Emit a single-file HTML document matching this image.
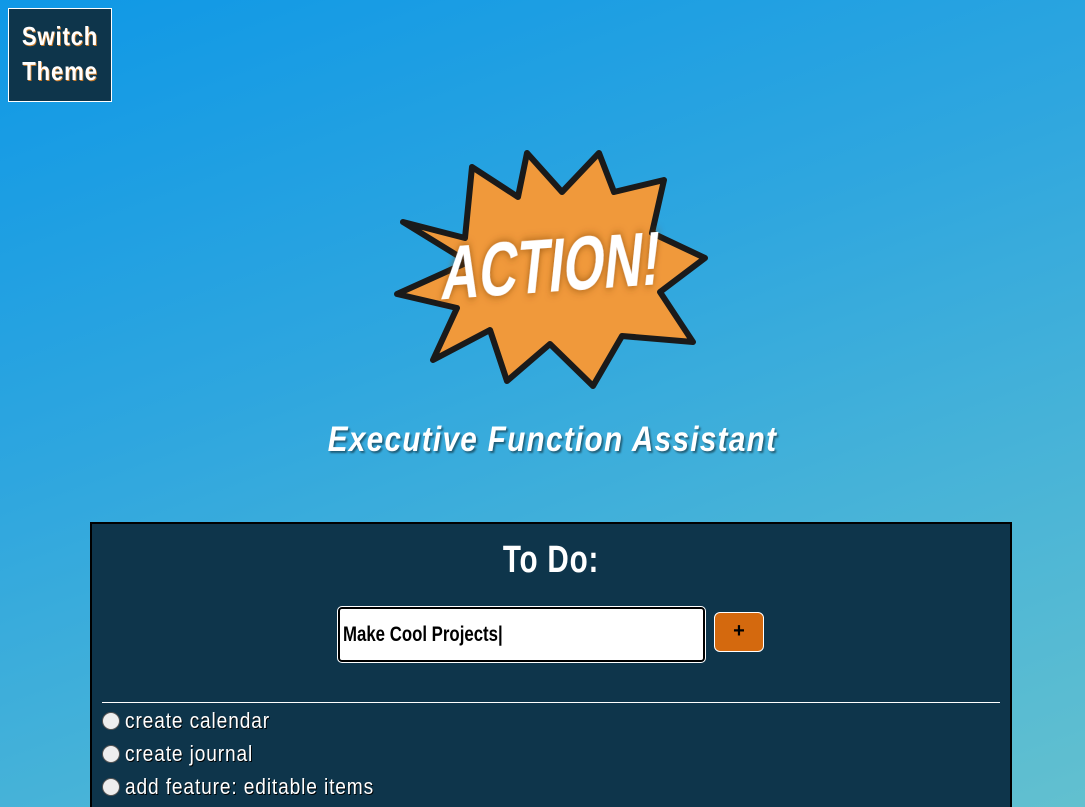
<!DOCTYPE html>
<html><head><meta charset="utf-8"><style>
html,body{margin:0;padding:0;width:1085px;height:807px;overflow:hidden}
body{background:linear-gradient(160deg,#0f98e6 0%,#2ea6df 40%,#4db6d6 75%,#62c0cf 100%);font-family:"Liberation Sans",sans-serif;position:relative}
#sw{position:absolute;left:8px;top:8px;width:104px;height:94px;background:#0e354b;border:1px solid #fff;box-sizing:border-box}
#sw div{position:absolute;left:0;width:100%;text-align:center;color:#fff;font-weight:bold;font-size:26px;letter-spacing:1px;text-shadow:1px 1px 0 #c77a2a;transform:scaleX(.85)}
#title{position:absolute;left:0;width:1105px;top:420px;text-align:center;color:#fff;font-weight:bold;font-style:italic;font-size:35px;letter-spacing:1.5px;text-shadow:2px 2px 2px rgba(0,0,0,.45);transform:scaleX(.85)}
#panel{position:absolute;left:90px;top:522px;width:922px;height:300px;background:#0e354b;border:2px solid #000;box-sizing:border-box}
#todo{position:absolute;left:0;width:100%;top:15px;text-align:center;color:#fff;font-weight:bold;font-size:38px;letter-spacing:1px;transform:scaleX(.78)}
#inp{position:absolute;left:246px;top:83px;width:367px;height:55px;background:#fff;border:2px solid #000;outline:1px solid #fff;border-radius:4px;box-sizing:border-box;font-weight:bold;font-size:21px;line-height:51px;padding-left:3px;color:#000}
#inp span{display:inline-block;transform:scaleX(.8);transform-origin:left}
#btn{position:absolute;left:622px;top:88px;width:50px;height:40px;background:#d4690e;border:1px solid #fff;border-radius:6px;box-sizing:border-box;text-align:center;font-weight:bold;font-size:20px;line-height:37px;color:#000}
#hr{position:absolute;left:10px;top:178px;width:898px;height:1px;background:#fff}
.it{position:absolute;left:10px;color:#fff;font-size:22px;letter-spacing:1px;text-shadow:1px 1px 0 #000;white-space:nowrap}
.it i{display:inline-block;width:18px;height:18px;border-radius:50%;background:#eee;border:1px solid #555;box-sizing:border-box;vertical-align:-2px;margin-right:5px}
.it span{display:inline-block;transform:scaleX(.87);transform-origin:left}
</style></head><body>
<div id="sw"><div style="top:12px">Switch</div><div style="top:47px">Theme</div></div>
<svg width="1085" height="420" style="position:absolute;left:0;top:0">
<defs><filter id="sh"><feDropShadow dx="0" dy="0" stdDeviation="5" flood-color="#7a4000" flood-opacity=".7"/></filter></defs>
<polygon points="403,222 465,238 472,167 518,197 527,153 562,192 599,153 614,192 664,180 652,233 705,258 660,292 693,342 622,336 593,386 550,344 507,381 490,330 433,360 457,308 397,294 468,262" fill="#f0993b" stroke="#1a1a1a" stroke-width="6" stroke-linejoin="round"/>
<g transform="translate(552 262) rotate(-4) skewX(-10) scale(0.64 0.92)" filter="url(#sh)">
<text x="0" y="32" text-anchor="middle" font-family="Liberation Sans" font-weight="bold" font-size="82" fill="#fff">ACTION!</text>
</g>
</svg>
<div id="title">Executive Function Assistant</div>
<div id="panel">
<div id="todo">To Do:</div>
<div id="inp"><span>Make Cool Projects|</span></div>
<div id="btn">+</div>
<div id="hr"></div>
<div class="it" style="top:184px"><i></i><span>create calendar</span></div>
<div class="it" style="top:217px"><i></i><span>create journal</span></div>
<div class="it" style="top:250px"><i></i><span>add feature: editable items</span></div>
</div>
</body></html>
